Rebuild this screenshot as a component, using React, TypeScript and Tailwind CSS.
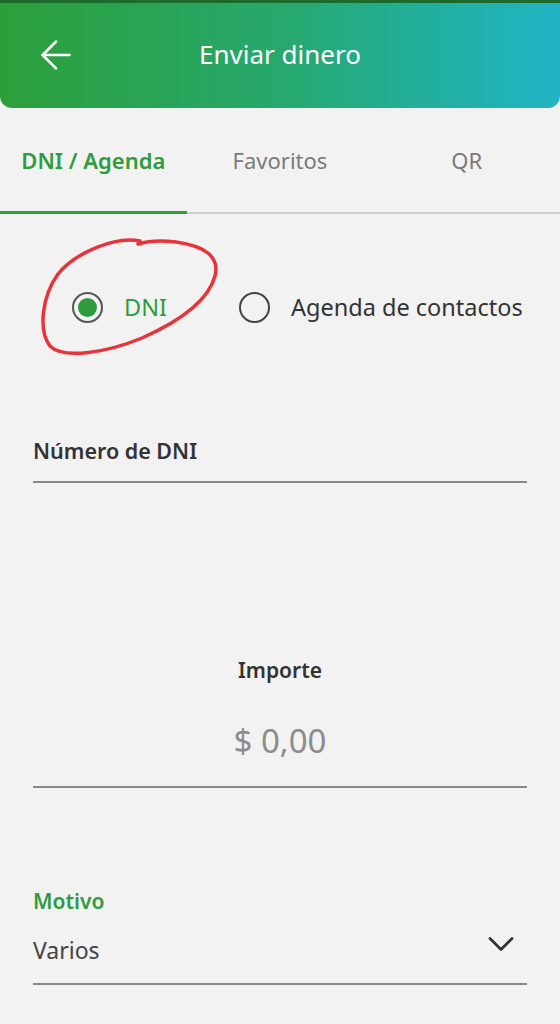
import { ArrowLeft, ChevronDown } from "lucide-react";

const font = { fontFamily: '"Noto Sans", "Open Sans", sans-serif' };

function Radio({ checked, label }: { checked?: boolean; label: string }) {
  return (
    <div className="flex items-center gap-[21px]">
      <span
        className={
          "flex h-[31px] w-[31px] items-center justify-center rounded-full border-2 " +
          (checked ? "border-[#555]" : "border-[#444]")
        }
      >
        {checked ? <span className="h-[19px] w-[19px] rounded-full bg-[#2e9c3c]" /> : null}
      </span>
      <span className={"text-[23.5px] " + (checked ? "text-[#2e9c3c]" : "text-[#333]")}>{label}</span>
    </div>
  );
}

export default function App() {
  return (
    <div className="min-h-[1024px] w-full bg-[#f2f2f2]" style={font}>
      <div className="h-[3px] bg-[#1d6b2c]" />
      <header className="relative flex h-[105px] items-center justify-center rounded-b-[12px] bg-gradient-to-r from-[#2c9f38] via-[#27a86c] to-[#22b4c5]">
        <ArrowLeft className="absolute left-[33px] top-[29px] h-[46px] w-[46px] text-white" strokeWidth={1.4} />
        <h1 className="-mt-[2px] text-[26px] text-white">Enviar dinero</h1>
      </header>

      <nav className="relative mt-[24px] grid grid-cols-3 border-b-2 border-[#cfcfcf]">
        <div className="flex h-[80px] items-start justify-center pt-[12px]">
          <span className="text-[22px] font-semibold text-[#2e9c3c]">DNI / Agenda</span>
        </div>
        <div className="flex h-[80px] items-start justify-center pt-[12px]">
          <span className="text-[22px] text-[#7a7a7a]">Favoritos</span>
        </div>
        <div className="flex h-[80px] items-start justify-center pt-[12px]">
          <span className="text-[22px] text-[#7a7a7a]">QR</span>
        </div>
        <div className="absolute bottom-[-2px] left-0 h-[3px] w-1/3 bg-[#2e9c3c]" />
      </nav>

      <section className="relative mt-[76px] flex items-center gap-[72px] pl-[72px]">
        <Radio checked label="DNI" />
        <Radio label="Agenda de contactos" />
        <svg
          className="absolute left-[36px] top-[-58px]"
          width="190"
          height="136"
          viewBox="0 0 190 136"
          fill="none"
        >
          <path
            d="M104 9 C80 4 40 20 22 42 C6 64 2 98 14 114 C28 128 72 120 106 106 C142 90 172 70 179 44 C184 24 168 14 140 10 C124 8 112 9 102 12"
            stroke="#e8333a"
            strokeWidth="3.5"
            strokeLinecap="round"
          />
        </svg>
      </section>

      <div className="mx-[33px] mt-[110px] border-b-2 border-[#8a8a8a] pb-[13px]">
        <span className="text-[21.5px] font-semibold text-[#333]">Número de DNI</span>
      </div>

      <div className="mx-[33px] mt-[172px] flex flex-col items-center border-b-2 border-[#8a8a8a] pb-[20px]">
        <span className="text-[21px] font-semibold text-[#333]">Importe</span>
        <span className="mt-[30px] text-[33px] text-[#8c8c8c]">$ 0,00</span>
      </div>

      <div className="mx-[33px] mt-[98px] border-b-2 border-[#8a8a8a] pb-[15px]">
        <div className="text-[21px] font-semibold text-[#2e9c3c]">Motivo</div>
        <div className="mt-[16px] flex items-center justify-between">
          <span className="text-[23px] text-[#444]">Varios</span>
          <ChevronDown className="mr-[4px] -mt-[12px] h-[44px] w-[44px] text-[#333]" strokeWidth={1.5} />
        </div>
      </div>
    </div>
  );
}
